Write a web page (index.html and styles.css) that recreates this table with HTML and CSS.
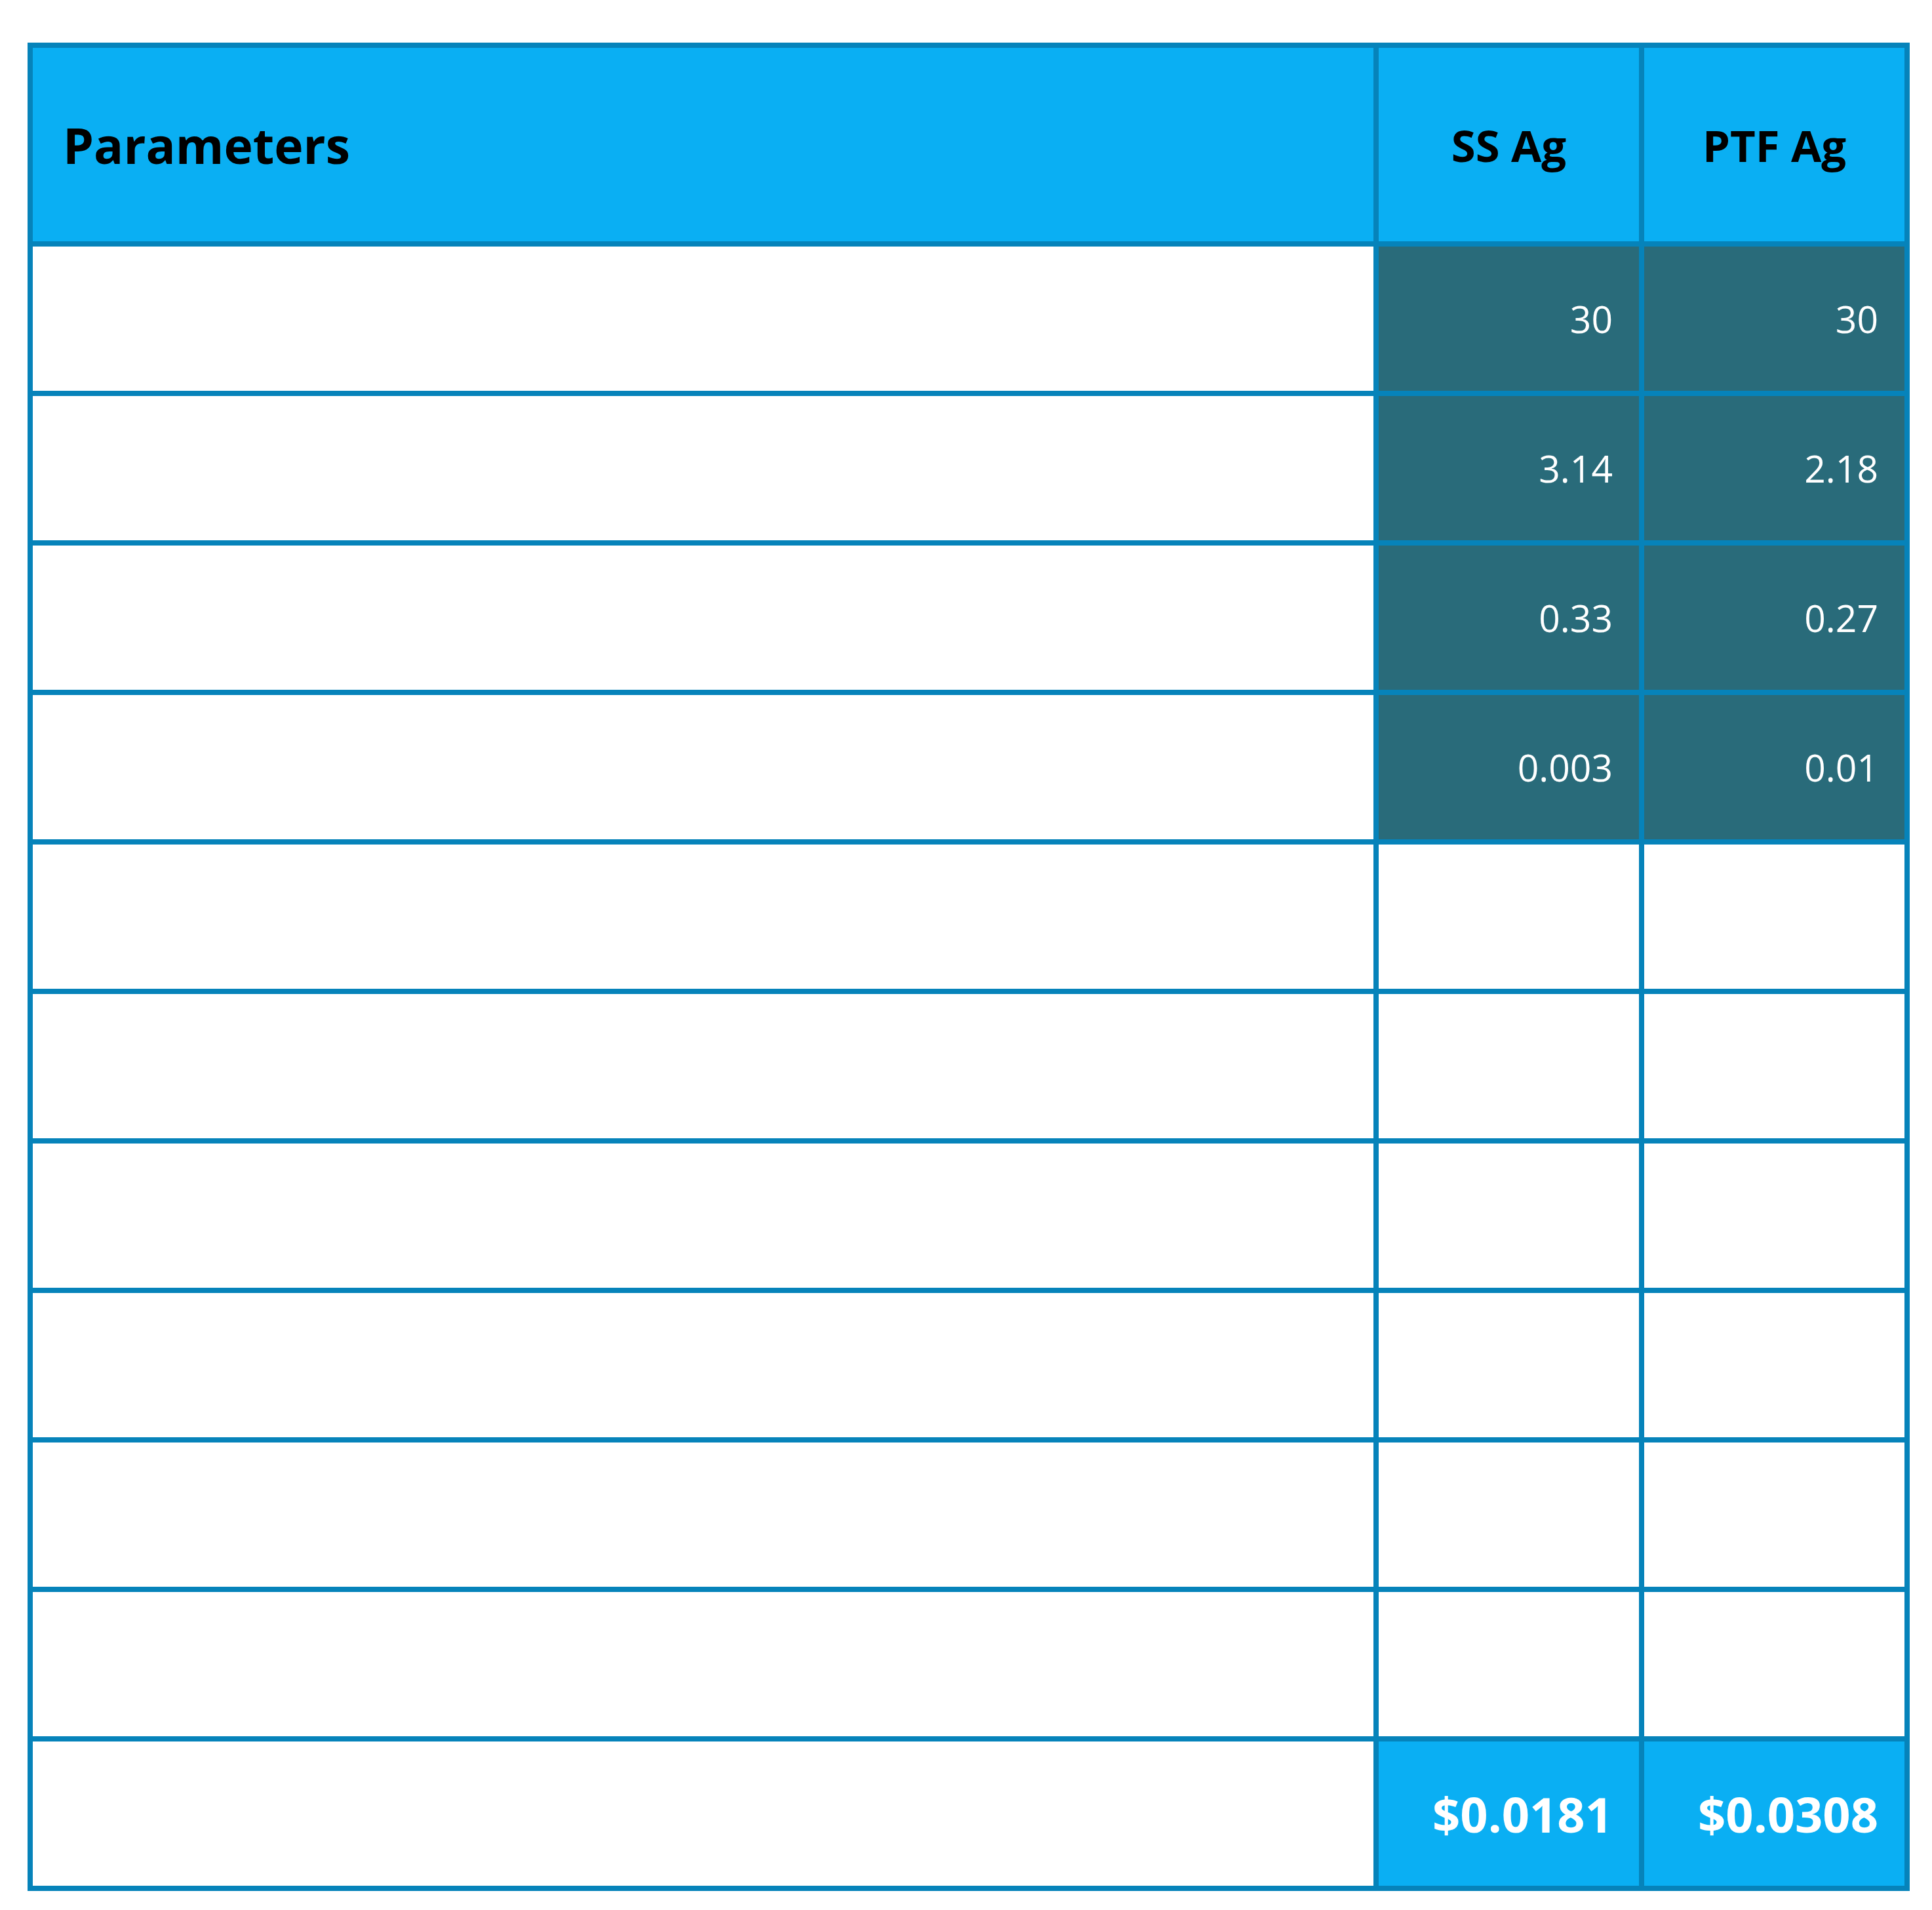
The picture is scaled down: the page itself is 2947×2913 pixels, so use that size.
FILE: index.html
```html
<!DOCTYPE html>
<html lang="en">
<head>
<meta charset="utf-8">
<title>Parameters</title>
<link rel="stylesheet" href="styles.css">
</head>
<body>
<table class="grid">
  <colgroup>
    <col class="c-param">
    <col class="c-val">
    <col class="c-val">
  </colgroup>
  <thead>
    <tr>
      <th class="h-param">Parameters</th>
      <th class="h-val">SS Ag</th>
      <th class="h-val">PTF Ag</th>
    </tr>
  </thead>
  <tbody>
    <tr><td></td><td class="dark">30</td><td class="dark">30</td></tr>
    <tr><td></td><td class="dark">3.14</td><td class="dark">2.18</td></tr>
    <tr><td></td><td class="dark">0.33</td><td class="dark">0.27</td></tr>
    <tr><td></td><td class="dark">0.003</td><td class="dark">0.01</td></tr>
    <tr><td></td><td></td><td></td></tr>
    <tr><td></td><td></td><td></td></tr>
    <tr><td></td><td></td><td></td></tr>
    <tr><td></td><td></td><td></td></tr>
    <tr><td></td><td></td><td></td></tr>
    <tr><td></td><td></td><td></td></tr>
    <tr><td></td><td class="total">$0.0181</td><td class="total">$0.0308</td></tr>
  </tbody>
</table>
</body>
</html>
```

FILE: styles.css
```css
html, body {
  margin: 0;
  padding: 0;
  background: #ffffff;
}

body {
  padding: 65px 0 0 42px;
  font-family: "Open Sans", "Noto Sans", "Liberation Sans", sans-serif;
}

.grid {
  table-layout: fixed;
  width: 2871px;
  border-collapse: separate;
  border-spacing: 8px;
  background: #0683ba;
}

.c-param { width: 2045px; }
.c-val { width: 397px; }

.grid th,
.grid td {
  padding: 0 40px 0 0;
  background: #ffffff;
  vertical-align: middle;
}

.grid th {
  height: 295px;
  background: #0aaff3;
  color: #000000;
  font-weight: 700;
}

.grid .h-param {
  text-align: left;
  padding-left: 46px;
  font-size: 75px;
}

.grid .h-val {
  text-align: center;
  padding: 0;
  font-size: 67px;
}

.grid td {
  height: 220px;
  text-align: right;
  color: #ffffff;
  font-size: 57px;
  font-weight: 500;
}

.grid td.dark {
  background: #296b7a;
}

.grid td.total {
  background: #0aaff3;
  font-size: 74px;
  font-weight: 700;
}
```
